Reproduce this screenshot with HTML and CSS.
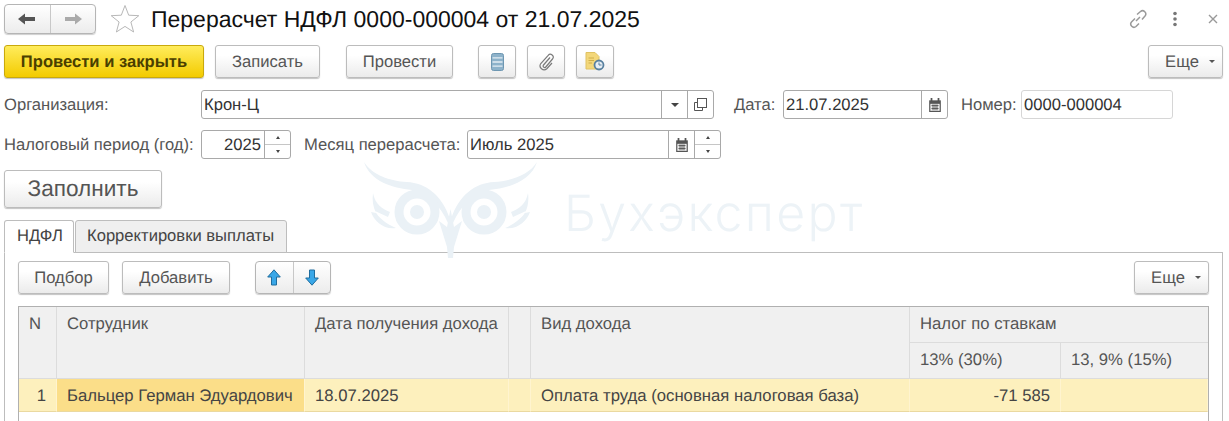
FILE: index.html
```html
<!DOCTYPE html>
<html lang="ru">
<head>
<meta charset="utf-8">
<title>Перерасчет НДФЛ</title>
<link rel="stylesheet" href="styles.css">
</head>
<body>
<div class="page">
  <header class="titlebar">
    <div class="btn-group nav">
      <span class="seg seg-nav"><svg width="20" height="14" viewBox="0 0 20 14"><path d="M1 7 8 1.500V5H18V9H8V12.500Z" fill="#555"/></svg></span>
      <span class="seg seg-nav"><svg width="20" height="14" viewBox="0 0 20 14"><path d="M19 7 12 1.500V5H2V9H12V12.500Z" fill="#aaa"/></svg></span>
    </div>
    <svg class="star" width="30" height="30" viewBox="0 0 30 30"><path d="M15 1.500 18.700 11.200 28.800 11.700 20.900 18 23.600 28 15 22.400 6.400 28 9.100 18 1.200 11.700 11.300 11.200Z" fill="#fff" stroke="#b8b8b8"/></svg>
    <h1 class="title">Перерасчет НДФЛ 0000-000004 от 21.07.2025</h1>
    <div class="win-icons">
      <svg width="20" height="20" viewBox="0 0 20 20" fill="none" stroke="#9a9a9a" stroke-width="1.500"><path d="M8 12 12 8M7 9.500 3.500 13a3.200 3.200 0 0 0 4.500 4.500L11 14.500M9 5.500 12.500 2.500a3.200 3.200 0 0 1 4.500 4.500L14 10.500"/></svg>
      <svg width="6" height="18" viewBox="0 0 6 18" fill="#777"><circle cx="3" cy="3.500" r="1.800"/><circle cx="3" cy="9" r="1.800"/><circle cx="3" cy="14.500" r="1.800"/></svg>
      <svg width="10" height="10" viewBox="0 0 10 10" stroke="#999" stroke-width="1.400"><path d="M1 1 9 9M9 1 1 9"/></svg>
    </div>
  </header>

  <div class="toolbar">
    <button class="btn btn-primary w-close">Провести и закрыть</button>
    <button class="btn w-save">Записать</button>
    <button class="btn w-post">Провести</button>
    <button class="btn btn-icon"><svg width="13" height="18" viewBox="0 0 13 18"><rect x=".5" y=".5" width="12" height="17" rx="2" fill="#8db2ca" stroke="#6e97b2"/><path d="M1.500 4.800H11.500M1.500 9H11.500M1.500 13.200H11.500" stroke="#e3edf3" stroke-width="1.300"/></svg></button>
    <button class="btn btn-icon"><svg width="17" height="18" viewBox="0 0 17 18" fill="none" stroke="#7a7a7a" stroke-width="1.200"><path d="M12 4.500 5.500 12a1.500 1.500 0 0 0 2.300 2l6.700-8a2.800 2.800 0 0 0-4.300-3.600L2.800 10.500a4 4 0 0 0 6 5.200L14 10"/></svg></button>
    <button class="btn btn-icon"><svg width="20" height="19" viewBox="0 0 20 19"><path d="M1 .5H10L14 4.500V17H1Z" fill="#f3d77a" stroke="#e0c262"/><path d="M3.500 6H9M3.500 8.500H9M3.500 11H7" stroke="#cfae48"/><circle cx="14" cy="13" r="4.500" fill="#e8eef3" stroke="#58809f" stroke-width="1.800"/><path d="M14 10.500V13H16.500" stroke="#58809f" fill="none"/></svg></button>
    <button class="btn btn-more push">Еще <i class="caret"></i></button>
  </div>

  <div class="form-row row-org">
    <label class="lbl w-l1">Организация:</label>
    <div class="field w-org"><span class="val">Крон-Ц</span>
      <span class="addon"><i class="caret dark"></i></span>
      <span class="addon"><svg width="13" height="13" viewBox="0 0 13 13" fill="none" stroke="#555"><path d="M3.500 4.500H.5V12.500H8.500V9.500"/><rect x="3.500" y=".5" width="9" height="9"/></svg></span>
    </div>
    <label class="lbl lbl-date">Дата:</label>
    <div class="field w-date"><span class="val">21.07.2025</span>
      <span class="addon"><svg class="cal" width="14" height="14" viewBox="0 0 12 12"><use href="#cal"/></svg></span>
    </div>
    <label class="lbl lbl-num">Номер:</label>
    <div class="field field-light w-num"><span class="val">0000-000004</span></div>
  </div>

  <div class="form-row row-period">
    <label class="lbl w-l1">Налоговый период (год):</label>
    <div class="field w-year"><span class="val right">2025</span>
      <span class="spin"><i class="tick up"></i><i class="tick"></i></span>
    </div>
    <label class="lbl lbl-month">Месяц перерасчета:</label>
    <div class="field w-month"><span class="val">Июль 2025</span>
      <span class="addon"><svg class="cal" width="14" height="14" viewBox="0 0 12 12"><use href="#cal"/></svg></span>
      <span class="spin"><i class="tick up"></i><i class="tick"></i></span>
    </div>
  </div>

  <button class="btn btn-fill">Заполнить</button>

  <div class="tabs">
    <span class="tab active">НДФЛ</span>
    <span class="tab second">Корректировки выплаты</span>
  </div>

  <section class="panel">
    <div class="panel-bar">
      <button class="btn w-pick">Подбор</button>
      <button class="btn w-add">Добавить</button>
      <div class="btn-group arrows">
        <span class="seg seg-arrow"><svg width="14" height="17" viewBox="0 0 14 17"><path d="M7 .8 13.300 8H9.500V16H4.500V8H.7Z" fill="#39a7e8" stroke="#1f6d9e"/></svg></span>
        <span class="seg seg-arrow"><svg width="14" height="17" viewBox="0 0 14 17"><path d="M7 16.200 13.300 9H9.500V1H4.500V9H.7Z" fill="#39a7e8" stroke="#1f6d9e"/></svg></span>
      </div>
      <button class="btn btn-more push">Еще <i class="caret"></i></button>
    </div>

    <div class="grid">
      <div class="th c-n span2">N</div>
      <div class="th c-emp span2">Сотрудник</div>
      <div class="th c-date span2">Дата получения дохода</div>
      <div class="th c-gap span2"></div>
      <div class="th c-kind span2">Вид дохода</div>
      <div class="th c-tax">Налог по ставкам</div>
      <div class="th c-13">13% (30%)</div>
      <div class="th c-9">13, 9% (15%)</div>
      <div class="td num">1</div>
      <div class="td sel">Бальцер Герман Эдуардович</div>
      <div class="td">18.07.2025</div>
      <div class="td"></div>
      <div class="td">Оплата труда (основная налоговая база)</div>
      <div class="td amount">-71 585</div>
      <div class="td"></div>
    </div>
  </section>

  <div class="watermark">
    <svg width="180" height="98" viewBox="0 0 180 98" fill="none">
      <defs>
        <g id="owl-half" fill="#eaf1f6">
          <path d="M2 1C10 14 28 20 45 21 64 22 80 34 88 58L86 62C78 44 66 33 50 29 30 27 8 20 2 1Z"/>
          <path d="M11 32C13 43 20 48 28 51L26 56 13 50C16 56 24 63 34 67 22 69 12 60 9 51L14 52C11 46 10 39 11 32Z"/>
          <circle cx="55" cy="51" r="18" stroke="#eaf1f6" stroke-width="9" fill="none"/>
          <circle cx="55" cy="51" r="7"/>
        </g>
      </defs>
      <use href="#owl-half"/>
      <use href="#owl-half" transform="matrix(-1 0 0 1 177 0)"/>
      <path d="M88.500 48 92 66 100 60 92 86 91 97H86L85 86 77 60 85 66Z" fill="#eaf1f6"/>
    </svg>
    <span class="wm-text">Бухэксперт</span>
  </div>
</div>
<svg class="defs" width="0" height="0"><defs><symbol id="cal" viewBox="0 0 12 12"><path d="M1 2H11V12H1Z" fill="#555"/><path d="M3 0V3M9 0V3" stroke="#555" stroke-width="1.500"/><path d="M2 5H10V11H2Z" fill="#eee"/><path d="M3 6.500H9M3 9H9M4.300 5.500V10.500M6 5.500V10.500M7.700 5.500V10.500" stroke="#555" stroke-width=".8"/></symbol></defs></svg>
</body>
</html>
```

FILE: styles.css
```css
* { box-sizing: border-box; }
html, body { margin: 0; padding: 0; background: #fff; }
body { width: 1229px; height: 421px; overflow: hidden; font-family: "Liberation Sans", Arial, sans-serif; font-size: 16.6px; color: #555; text-rendering: geometricPrecision; }
.page { position: relative; padding: 4px 6px 0 4px; height: 421px; overflow: hidden; display: flex; flex-direction: column; align-items: stretch; }
.defs { position: absolute; }

.titlebar { display: flex; align-items: center; height: 30px; margin-bottom: 11px; }
.btn-group { display: flex; border: 1px solid #b5b5b5; border-radius: 4px; background: linear-gradient(#fff, #ececec); box-shadow: 0 1px 1px #cfcfcf; }
.nav { width: 92px; height: 30px; }
.seg { display: flex; align-items: center; justify-content: center; }
.seg + .seg { border-left: 1px solid #c8c8c8; }
.seg-nav { flex: 1; }
.star { margin-left: 14px; }
.title { margin: 0 0 0 11px; font-size: 23px; font-weight: 400; color: #111; line-height: 30px; }
.win-icons { margin-left: auto; display: flex; align-items: center; gap: 24px; padding-right: 5px; }
.win-icons svg:last-child { margin-left: 6px; }

.btn { height: 33px; padding: 0; border: 1px solid #bcbcbc; border-radius: 3px; background: linear-gradient(#fff 30%, #ebebeb); box-shadow: 0 1px 1px #c4c4c4; font: 16.6px "Liberation Sans", Arial, sans-serif; color: #555; display: inline-flex; align-items: center; justify-content: center; flex: none; text-rendering: geometricPrecision; }
.btn-primary { background: linear-gradient(#ffec5c, #f3cb00); border-color: #c9a90c; font-weight: 700; color: #4a3f00; }
.toolbar { display: flex; height: 33px; margin-bottom: 12px; }
.w-close { width: 200px; }
.w-save { width: 105px; margin-left: 11px; }
.w-post { width: 107px; margin-left: 26px; }
.btn-icon { width: 38px; margin-left: 11px; }
.w-post + .btn-icon { margin-left: 25px; }
.btn-more { width: 75px; gap: 10px; padding-left: 9px; }
.push { margin-left: auto; }
.caret { display: inline-block; width: 0; height: 0; border: 3px solid transparent; border-top: 3px solid #555; border-bottom: 0; }
.caret.dark { border-width: 4px 4px 0; border-top-color: #444; }

.form-row { display: flex; align-items: center; height: 29px; }
.row-org { margin-bottom: 11px; }
.row-period { margin-bottom: 11px; }
.lbl { white-space: nowrap; flex: none; }
.w-l1 { width: 197px; }
.lbl-date { margin-left: 21px; width: 49px; }
.lbl-num { margin-left: 13px; width: 60px; }
.lbl-month { margin-left: 13px; width: 163px; }
.field { height: 29px; display: flex; border: 1px solid #a9a9a9; border-radius: 3px; background: #fff; flex: none; color: #333; }
.field-light { border-color: #d6d6d6; }
.val { flex: 1; padding-left: 2px; line-height: 27px; }
.val.right { text-align: right; padding-right: 3px; }
.w-org { width: 513px; margin-right: -1px; }
.w-date { width: 165px; }
.w-num { width: 152px; }
.w-year { width: 90px; }
.w-month { width: 254px; }
.addon { width: 26px; border-left: 1px solid #a9a9a9; display: flex; align-items: center; justify-content: center; }
.spin { width: 26px; border-left: 1px solid #a9a9a9; display: flex; flex-direction: column; }
.tick { flex: 1; display: flex; align-items: center; justify-content: center; }
.tick::after { content: ""; border: 2.500px solid transparent; border-top: 3px solid #444; border-bottom: 0; }
.tick.up { border-bottom: 1px solid #c6c6c6; }
.tick.up::after { border-top: 0; border-bottom: 3px solid #444; }

.btn-fill { width: 158px; height: 38px; font-size: 22.6px; margin-bottom: 12px; }

.tabs { display: flex; height: 33px; margin-bottom: -1px; position: relative; z-index: 1; gap: 1px; }
.tab { height: 33px; padding: 0 11px; line-height: 30px; border: 1px solid #bdbdbd; border-radius: 3px 3px 0 0; background: #efefef; color: #444; white-space: nowrap; }
.tab.active { width: 70px; background: #fff; border-bottom-color: #fff; padding: 0 12px; }
.tab.second { width: 212px; }

.panel { border: 1px solid #bdbdbd; border-bottom: 0; flex: 1; padding: 8px 13px 0; }
.panel-bar { display: flex; height: 33px; margin-bottom: 12px; }
.w-pick { width: 91px; }
.w-add { width: 108px; margin-left: 13px; }
.arrows { width: 76px; height: 33px; margin-left: 25px; }
.seg-arrow { flex: 1; }

.grid { display: grid; grid-template-columns: 38px 248px 204px 22px 379px 151px 147px; grid-template-rows: 36px 36px 33px; border: 1px solid #b0b0b0; border-bottom: 0; height: 200px; align-content: start; font-size: 16.7px; }
.th { background: #f0f0f0; padding: 8px 10px 0; border-right: 1px solid #dcdcdc; border-bottom: 1px solid #dcdcdc; color: #555; white-space: nowrap; line-height: 18px; }
.span2 { grid-row: span 2; }
.c-tax { grid-column: 6 / span 2; border-right: 0; }
.c-13 { grid-column: 6; grid-row: 2; }
.c-9 { grid-column: 7; grid-row: 2; border-right: 0; }
.c-n { padding: 8px 0 0 10px; }
.td { background: #fdf0bd; border-right: 1px solid #fff4cf; border-bottom: 1px solid #ead9a0; padding: 8px 10px 0; white-space: nowrap; line-height: 18px; color: #444; }
.td.num { text-align: right; }
.td.sel { background: #fbde89; }
.td.amount { text-align: right; }

.watermark { position: absolute; left: 362px; top: 161px; display: flex; align-items: center; gap: 25px; pointer-events: none; }
.wm-text { font-family: "Inter", sans-serif; font-weight: 300; font-size: 50px; letter-spacing: 2.300px; margin-left: -3px; color: #edf3f7; line-height: 60px; margin-top: 8px; white-space: nowrap; }
```
